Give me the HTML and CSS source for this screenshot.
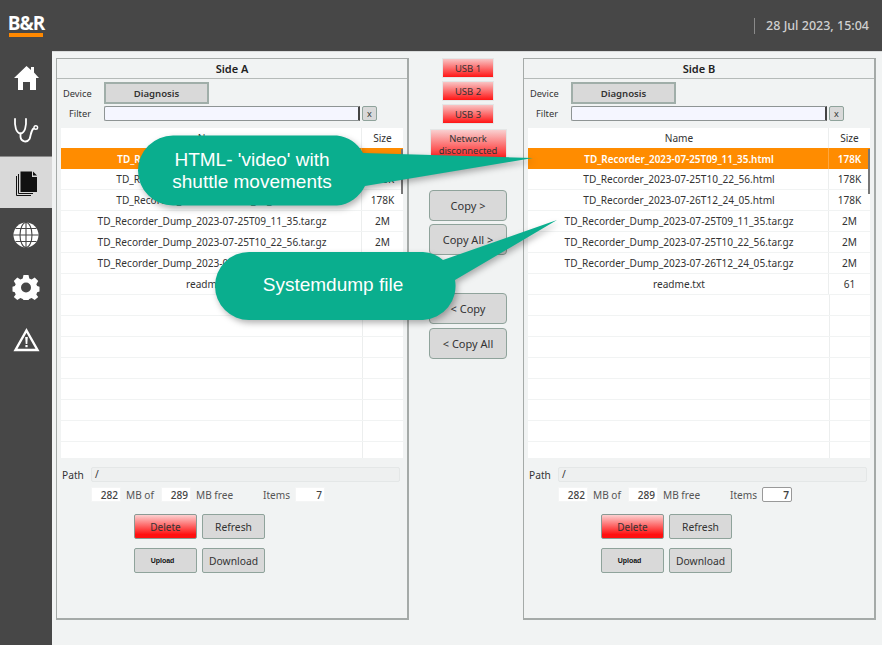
FILE: index.html
```html
<!DOCTYPE html>
<html lang="en">
<head>
    <meta charset="UTF-8">
    <title>File manager</title>
    <link rel="stylesheet" href="styles.css">
</head>
<body>
<div class="app">
    <!-- left navigation -->
    <nav class="sidebar">
        <div class="logo"><span class="logo-text">B&amp;R</span><span class="logo-bar"></span></div>
        <div class="nav-item">
            <svg viewBox="0 0 52 52" width="52" height="52"><path fill="#fff" d="M26.5 14 L31 18 V15 H34 V20.5 L39 26 H36 V38 H30 V30 H23 V38 H18 V26 H14 Z"/></svg>
        </div>
        <div class="nav-item">
            <svg viewBox="0 0 52 52" width="52" height="52" fill="none" stroke="#fff" stroke-width="1.8" stroke-linecap="round"><path d="M15 15 C14.5 22 16 29 20.5 29.5 C25 29 26.5 22 26 15"/><path d="M20.5 29.5 V33 C21 38 27 39 29.5 35 C31 32 30.5 27 33.5 24.5"/><circle cx="35.8" cy="23.5" r="1.8" stroke-width="1.4"/></svg>
        </div>
        <div class="nav-item active">
            <svg viewBox="0 0 52 52" width="52" height="52"><g transform="translate(0,1)"><path fill="none" stroke="#111" stroke-width="1" d="M16.5 19 V38.5 H31"/><path fill="none" stroke="#111" stroke-width="1" d="M18.5 17 V36.5 H33"/><path fill="#111" d="M20.5 14.5 H32 V20 H37 V35 H20.5 Z"/><path fill="#111" d="M33 14.5 L37 18.5 H33 Z"/></g></svg>
        </div>
        <div class="nav-item">
            <svg viewBox="0 0 52 52" width="52" height="52"><circle cx="26" cy="27" r="12.5" fill="#fff"/><g fill="none" stroke="#474747" stroke-width="1.1"><ellipse cx="26" cy="27" rx="6" ry="12.5"/><path d="M26 14.5 V39.5 M13.5 27 H38.5 M15.5 20.5 H36.5 M15.5 33.5 H36.5"/></g></svg>
        </div>
        <div class="nav-item">
            <svg viewBox="0 0 52 52" width="52" height="52"><path fill="#fff" d="M23.5 15 H28.5 L29.3 18.5 L31.6 19.5 L34.7 17.6 L38.2 21.1 L36.3 24.2 L37.2 26 L39.5 26.7 V31.5 L37.2 32.2 L36.3 34.5 L38.2 37 L34.7 40 L31.6 38.1 L29.3 39 L28.5 40 H23.5 L22.7 39 L20.4 38.1 L17.3 40 L13.8 37 L15.7 34.5 L14.8 32.2 L12.5 31.5 V26.7 L14.8 26 L15.7 24.2 L13.8 21.1 L17.3 17.6 L20.4 19.5 L22.7 18.5 Z"/><circle cx="26" cy="27.5" r="5" fill="#474747"/></svg>
        </div>
        <div class="nav-item">
            <svg viewBox="0 0 52 52" width="52" height="52"><path fill="none" stroke="#fff" stroke-width="2.4" stroke-linejoin="miter" d="M26.5 18.5 L37.5 38 H15.5 Z"/><path fill="#fff" d="M25.2 25 H27.8 L27.3 32 H25.7 Z"/><rect x="25.4" y="33" width="2.2" height="2.2" fill="#fff"/></svg>
        </div>
    </nav>

    <div class="main">
        <header class="topbar"><span class="clock">28 Jul 2023, 15:04</span></header>

        <div class="content">
            <section class="panel">
                <h2 class="panel-title">Side A</h2>
                <div class="form-row device-row"><label class="lbl lbl-device">Device</label><button class="btn btn-device">Diagnosis</button></div>
                <div class="form-row filter-row"><label class="lbl lbl-filter">Filter</label><div class="filter-input"></div><button class="btn btn-x">x</button></div>
                <div class="file-table">
                    <div class="file-row head"><span class="name">Name</span><span class="size">Size</span></div>
                    <div class="file-row selected"><span class="name">TD_Recorder_2023-07-25T09_11_35.html</span><span class="size">178K</span></div>
                    <div class="file-row"><span class="name">TD_Recorder_2023-07-25T10_22_56.html</span><span class="size">178K</span></div>
                    <div class="file-row"><span class="name">TD_Recorder_2023-07-26T12_24_05.html</span><span class="size">178K</span></div>
                    <div class="file-row"><span class="name">TD_Recorder_Dump_2023-07-25T09_11_35.tar.gz</span><span class="size">2M</span></div>
                    <div class="file-row"><span class="name">TD_Recorder_Dump_2023-07-25T10_22_56.tar.gz</span><span class="size">2M</span></div>
                    <div class="file-row"><span class="name">TD_Recorder_Dump_2023-07-26T12_24_05.tar.gz</span><span class="size">2M</span></div>
                    <div class="file-row"><span class="name">readme.txt</span><span class="size">61</span></div>
                    <div class="file-row"></div><div class="file-row"></div><div class="file-row"></div><div class="file-row"></div>
                    <div class="file-row"></div><div class="file-row"></div><div class="file-row"></div><div class="file-row"></div>
                    <div class="scroll-thumb"></div>
                </div>
                <div class="path-row"><span class="lbl-path">Path</span><div class="path-input">/</div></div>
                <div class="stats-row">
                    <span class="num">282</span><span class="unit">MB of</span>
                    <span class="num">289</span><span class="unit">MB free</span>
                    <span class="items">Items</span><span class="num num-items">7</span>
                </div>
                <div class="actions">
                    <button class="btn btn-act btn-red">Delete</button><button class="btn btn-act">Refresh</button>
                    <button class="btn btn-act btn-upload">Upload</button><button class="btn btn-act">Download</button>
                </div>
            </section>

            <div class="middle">
                <button class="btn-usb">USB 1</button>
                <button class="btn-usb">USB 2</button>
                <button class="btn-usb">USB 3</button>
                <button class="btn-net">Network disconnected</button>
                <button class="btn btn-copy first">Copy &gt;</button>
                <button class="btn btn-copy">Copy All &gt;</button>
                <button class="btn btn-copy gap">&lt; Copy</button>
                <button class="btn btn-copy">&lt; Copy All</button>
            </div>

            <section class="panel">
                <h2 class="panel-title">Side B</h2>
                <div class="form-row device-row"><label class="lbl lbl-device">Device</label><button class="btn btn-device">Diagnosis</button></div>
                <div class="form-row filter-row"><label class="lbl lbl-filter">Filter</label><div class="filter-input"></div><button class="btn btn-x">x</button></div>
                <div class="file-table">
                    <div class="file-row head"><span class="name">Name</span><span class="size">Size</span></div>
                    <div class="file-row selected"><span class="name">TD_Recorder_2023-07-25T09_11_35.html</span><span class="size">178K</span></div>
                    <div class="file-row"><span class="name">TD_Recorder_2023-07-25T10_22_56.html</span><span class="size">178K</span></div>
                    <div class="file-row"><span class="name">TD_Recorder_2023-07-26T12_24_05.html</span><span class="size">178K</span></div>
                    <div class="file-row"><span class="name">TD_Recorder_Dump_2023-07-25T09_11_35.tar.gz</span><span class="size">2M</span></div>
                    <div class="file-row"><span class="name">TD_Recorder_Dump_2023-07-25T10_22_56.tar.gz</span><span class="size">2M</span></div>
                    <div class="file-row"><span class="name">TD_Recorder_Dump_2023-07-26T12_24_05.tar.gz</span><span class="size">2M</span></div>
                    <div class="file-row"><span class="name">readme.txt</span><span class="size">61</span></div>
                    <div class="file-row"></div><div class="file-row"></div><div class="file-row"></div><div class="file-row"></div>
                    <div class="file-row"></div><div class="file-row"></div><div class="file-row"></div><div class="file-row"></div>
                    <div class="scroll-thumb"></div>
                </div>
                <div class="path-row"><span class="lbl-path">Path</span><div class="path-input">/</div></div>
                <div class="stats-row">
                    <span class="num">282</span><span class="unit">MB of</span>
                    <span class="num">289</span><span class="unit">MB free</span>
                    <span class="items">Items</span><span class="num num-items boxed">7</span>
                </div>
                <div class="actions">
                    <button class="btn btn-act btn-red">Delete</button><button class="btn btn-act">Refresh</button>
                    <button class="btn btn-act btn-upload">Upload</button><button class="btn btn-act">Download</button>
                </div>
            </section>
        </div>
    </div>

    <!-- annotations drawn on top of the screenshot -->
    <svg class="callouts" width="882" height="645" viewBox="0 0 882 645">
        <path class="shape" d="M173 135.5 H337 A35 35 0 0 1 363 153 L533 158 L365 186 A35 35 0 0 1 337 205.5 H173 A35 35 0 0 1 173 135.5 Z"/>
        <path class="shape" d="M249 252 H423 A34 34 0 0 1 443 260 L557 220 L455 280 A34 34 0 0 1 423 320 H249 A34 34 0 0 1 249 252 Z"/>
    </svg>
    <div class="callout-text c1">HTML- 'video' with<br>shuttle movements</div>
    <div class="callout-text c2">Systemdump file</div>
</div>
</body>
</html>
```

FILE: styles.css
```css
*{
    margin: 0;
    padding: 0;
    box-sizing: border-box;
}
body{
    width: 882px;
    height: 645px;
    overflow: hidden;
    font-family: "Noto Sans", "Open Sans", sans-serif;
    font-size: 10.1px;
    color: #333;
    background-color: #f1f3f3;
}
.app{
    position: relative;
    display: flex;
    width: 882px;
    height: 645px;
}

/* sidebar */
.sidebar{
    width: 52px;
    height: 645px;
    flex: none;
    background-color: #474747;
}
.logo{
    height: 52px;
    padding: 13px 9px 0;
    display: flex;
    flex-direction: column;
    align-items: center;
}
.logo-text{
    font-family: "Open Sans", sans-serif;
    font-weight: 700;
    font-size: 19px;
    line-height: 20px;
    letter-spacing: -1px;
    color: #fff;
}
.logo-bar{
    width: 34px;
    height: 4px;
    background-color: #ff8800;
}
.nav-item{
    height: 52px;
}
.nav-item svg{
    display: block;
}
.nav-item.active{
    background-color: #d9d9d9;
    border-top: 1px solid #8a8a8a;
}
.nav-item.active svg{
    margin-top: -1px;
}

/* top bar */
.main{
    flex: 1;
    min-width: 0;
}
.topbar{
    height: 52px;
    background-color: #474747;
    border-bottom: 1px solid #d8dada;
    display: flex;
    justify-content: flex-end;
    align-items: center;
    padding: 0 13px 0 0;
}
.clock{
    font-size: 12.5px;
    font-weight: 500;
    color: #d0d0d0;
    border-left: 1px solid #8a8a8a;
    padding-left: 11px;
    line-height: 16px;
}

/* panels */
.content{
    display: flex;
    padding: 6px 0 0 4px;
}
.panel{
    width: 353px;
    height: 562px;
    flex: none;
    border: 2px solid #a5aaa8;
    border-width: 1px 2px 2px 1px;
    padding: 0 4px;
}
.panel-title{
    margin: 0 -4px;
    height: 20px;
    font-size: 11px;
    font-weight: 600;
    line-height: 20px;
    text-align: center;
    color: #222;
    border-bottom: 1px solid #b5bab8;
}
.form-row{
    display: flex;
    align-items: center;
}
.device-row{
    margin-top: 3px;
    height: 22px;
}
.filter-row{
    margin-top: 2px;
    height: 15px;
}
.lbl{
    width: 43px;
    text-align: right;
    padding-right: 13px;
    flex: none;
    font-size: 9.3px;
}
.lbl-device{
    text-align: left;
    padding: 0 0 0 2px;
}
.btn{
    font-family: inherit;
    font-size: 10.3px;
    color: #333;
    background-color: #d9d9d9;
    border: 1px solid #8fa39b;
    border-radius: 2px;
}
.btn-device{
    width: 105px;
    height: 22px;
    border: 2px solid #a0aea9;
    border-radius: 0;
    font-weight: 600;
    font-size: 9.6px;
}
.filter-input{
    width: 256px;
    height: 15px;
    background-color: #f5f6ff;
    border: 1px solid #8e9494;
    border-right: 2px solid #444;
    border-radius: 2px 0 0 2px;
}
.btn-x{
    width: 15px;
    height: 15px;
    margin-left: 2px;
    font-size: 9px;
    line-height: 11px;
}

/* file list */
.file-table{
    position: relative;
    margin-top: 7px;
    height: 330px;
    overflow: hidden;
}
.file-row{
    display: flex;
    height: 21px;
    line-height: 20px;
    background-color: #fff;
    border-bottom: 1px solid #f1f3f3;
}
.file-row.head{
    height: 20px;
    line-height: 21px;
    border: 0;
}
.name{
    width: 301px;
    flex: none;
    padding-left: 2px;
    text-align: center;
    border-right: 1px solid #eceeee;
    height: 100%;
    white-space: nowrap;
}
.size{
    flex: 1;
    text-align: center;
}
.file-row:empty::before{
    content: "";
    width: 301px;
    border-right: 1px solid #eceeee;
}
.file-row.selected{
    background-color: #ff8c00;
    color: #fff;
    font-size: 9.9px;
    line-height: 22px;
    font-weight: 600;
    border-bottom: 0;
}
.file-row.selected .name{
    border-right-color: #ffa63d;
}
.scroll-thumb{
    position: absolute;
    right: 0;
    top: 21px;
    width: 2px;
    height: 45px;
    background-color: #777;
}

/* path and counters */
.path-row{
    display: flex;
    align-items: center;
    margin-top: 9px;
    height: 15px;
}
.lbl-path{
    width: 30px;
    padding-left: 1px;
    flex: none;
    font-size: 10.2px;
}
.path-input{
    width: 309px;
    height: 15px;
    padding-left: 3px;
    line-height: 13px;
    border: 1px solid #e4e7e7;
    border-radius: 2px;
    background-color: #eef0f0;
}
.stats-row{
    display: flex;
    align-items: center;
    margin-top: 5px;
    height: 15px;
    padding-left: 30px;
    color: #555;
}
.num{
    width: 30px;
    height: 15px;
    line-height: 15px;
    text-align: right;
    padding-right: 2px;
    background-color: #fff;
    border: 1px solid #f4f5f5;
    color: #444;
    font-weight: 500;
}
.unit{
    padding-left: 5px;
    width: 40px;
    white-space: nowrap;
}
.unit + .num + .unit{
    width: 72px;
}
.items{
    width: 32px;
}
.num.boxed{
    border: 1px solid #999;
    border-radius: 2px;
    font-weight: 600;
}

/* buttons under the list */
.actions{
    display: grid;
    grid-template-columns: 63px 63px;
    grid-auto-rows: 25px;
    column-gap: 5px;
    row-gap: 9px;
    margin: 12px 0 0 73px;
}
.btn-act{
    height: 25px;
}
.btn-red{
    background: linear-gradient(#fcd0d0, #ff1010 85%);
    border-color: #8a9a94;
    font-size: 10px;
}
.btn-upload{
    font-family: "Liberation Sans", sans-serif;
    font-size: 7px;
    font-weight: 700;
    padding-right: 6px;
    color: #111;
}

/* middle column */
.middle{
    width: 114px;
    flex: none;
    display: flex;
    flex-direction: column;
    align-items: center;
    padding-left: 4px;
}
.btn-usb{
    width: 50px;
    height: 18px;
    margin-top: 5px;
    font-family: inherit;
    font-size: 9.5px;
    color: #333;
    border: 0;
    outline: 1px solid #e4e6e6;
    background: linear-gradient(#f9c4c4, #ff1414);
}
.btn-usb:first-child{
    margin-top: 1px;
}
.btn-net{
    width: 75px;
    height: 30px;
    margin-top: 7px;
    font-family: inherit;
    font-size: 9.4px;
    line-height: 12px;
    color: #333;
    border: 0;
    outline: 1px solid #e4e6e6;
    background: linear-gradient(#f9d0d0, #ff1414);
}
.btn-copy{
    width: 78px;
    height: 31px;
    margin-top: 3px;
    border-radius: 4px;
    font-size: 11px;
}
.btn-copy.first{
    margin-top: 30px;
}
.btn-copy.gap{
    margin-top: 38px;
}
.btn-copy.gap + .btn-copy{
    margin-top: 4px;
}

/* green callouts */
.callouts{
    position: absolute;
    left: 0;
    top: 0;
    pointer-events: none;
}
.shape{
    fill: #0aae8e;
    filter: drop-shadow(2px 3px 3px rgba(0,0,0,0.3));
}
.callout-text{
    position: absolute;
    font-family: "Liberation Sans", sans-serif;
    font-size: 19px;
    line-height: 22px;
    color: #fff;
    text-align: center;
    white-space: nowrap;
}
.c1{
    left: 150px;
    top: 149px;
    width: 204px;
}
.c2{
    left: 233px;
    top: 274px;
    width: 200px;
}
```
